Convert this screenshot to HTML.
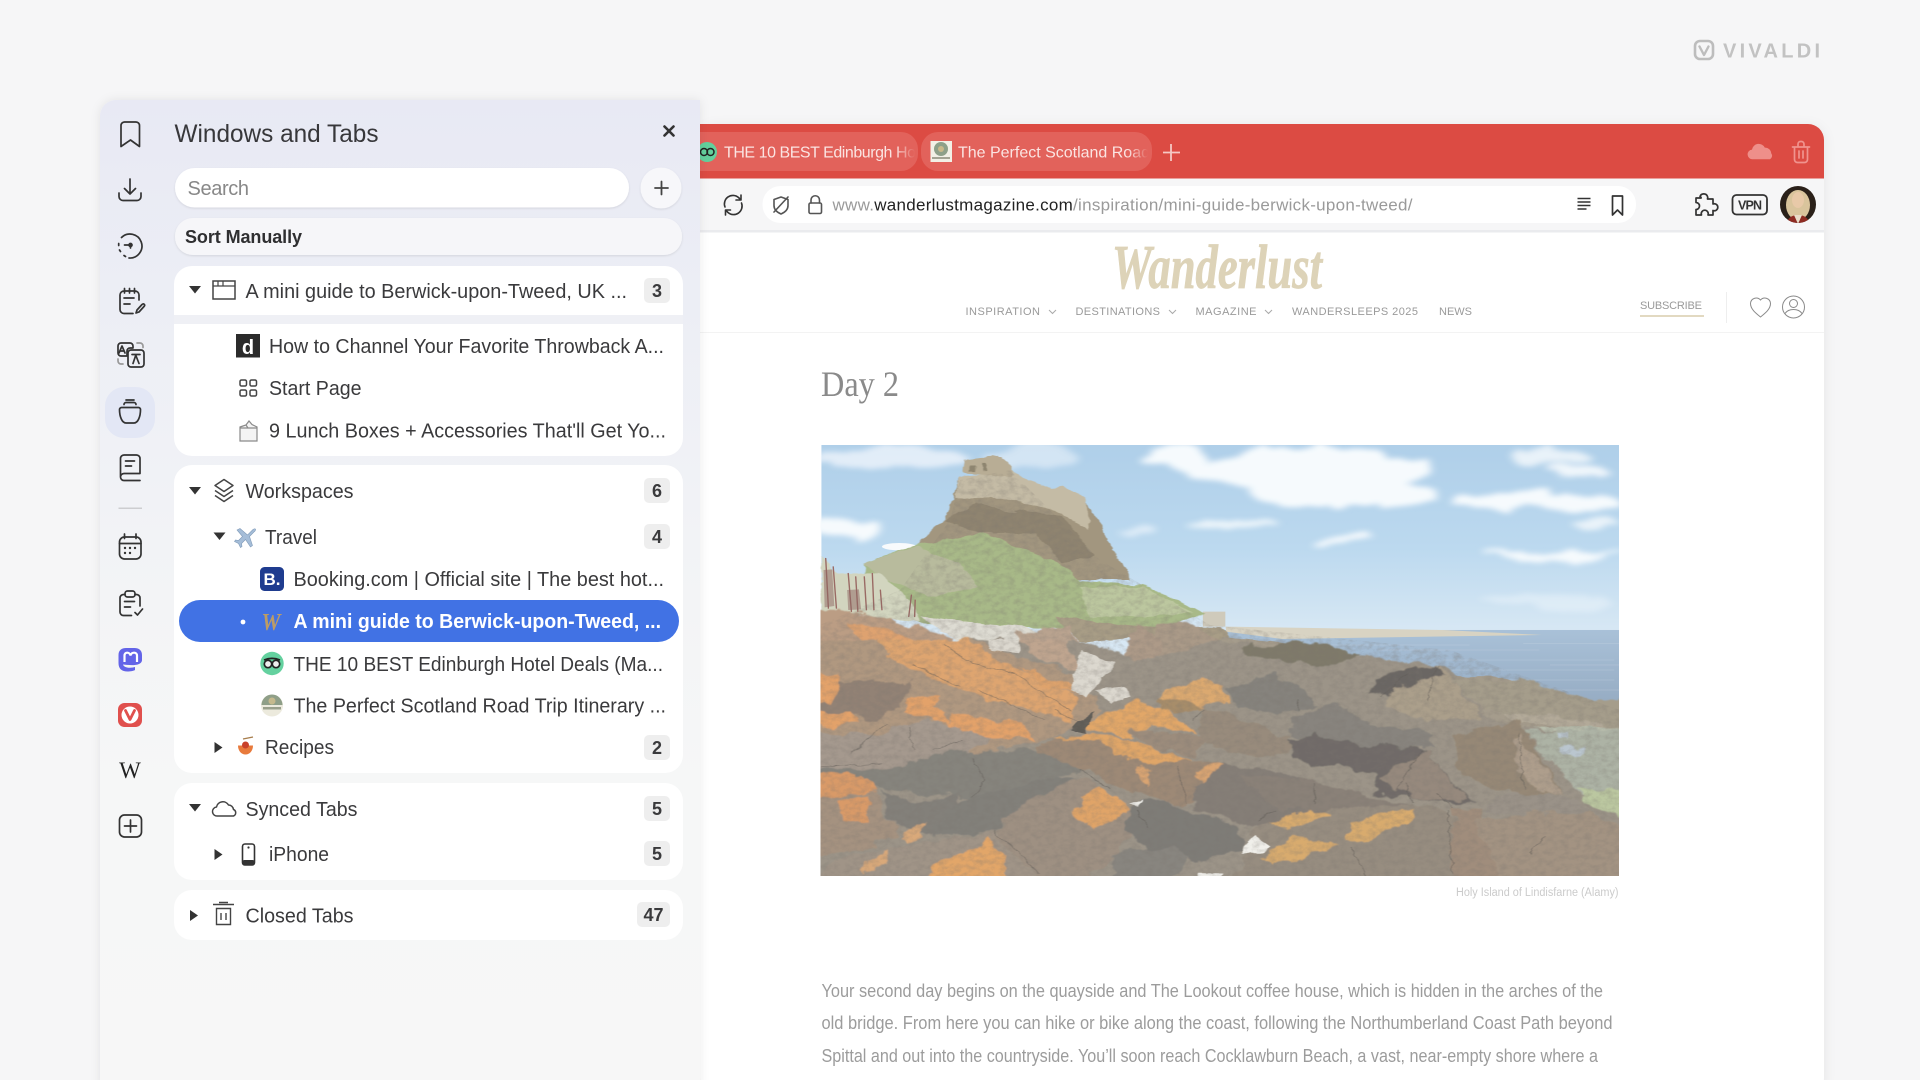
<!DOCTYPE html>
<html lang="en"><head><meta charset="utf-8"><title>Vivaldi Windows and Tabs</title>
<style>
html,body{margin:0;padding:0;width:1920px;height:1080px;overflow:hidden;background:#f6f6f7}
svg{display:block;position:absolute;left:0;top:0}
text{font-family:"Liberation Sans",sans-serif;fill:#333}
.t{font-size:20px;fill:#3a3a3c}
.b{font-size:18px;font-weight:700;fill:#3a3a3c;text-anchor:middle}
.i{fill:none;stroke:#333;stroke-width:1.7;stroke-linecap:round;stroke-linejoin:round}
.n{font-size:11px;fill:#9a9a9a;letter-spacing:1px}
.p{font-size:18px;fill:#9c9c9c}
</style></head><body>
<svg width="1920" height="1080" viewBox="0 0 1920 1080" xmlns="http://www.w3.org/2000/svg">
<defs>
<linearGradient id="pg" x1="0" y1="100" x2="0" y2="1080" gradientUnits="userSpaceOnUse"><stop offset="0" stop-color="#e8e9f4"/><stop offset=".2" stop-color="#eceef5"/><stop offset=".45" stop-color="#f2f3f6"/><stop offset=".7" stop-color="#f6f7f7"/><stop offset="1" stop-color="#f7f7f7"/></linearGradient>
<linearGradient id="sky" x1="0" y1="45" x2="0" y2="610" gradientUnits="userSpaceOnUse"><stop offset="0" stop-color="#afcfe9"/><stop offset=".55" stop-color="#bcd9ef"/><stop offset="1" stop-color="#d8e8f4"/></linearGradient>
<linearGradient id="sea" x1="0" y1="600" x2="0" y2="810" gradientUnits="userSpaceOnUse"><stop offset="0" stop-color="#a9c1d8"/><stop offset="1" stop-color="#97adc4"/></linearGradient>
<linearGradient id="f1" x1="895" y1="0" x2="915" y2="0" gradientUnits="userSpaceOnUse"><stop offset="0" stop-color="#fbe4e2"/><stop offset="1" stop-color="#e2625b"/></linearGradient>
<linearGradient id="f2" x1="1128" y1="0" x2="1148" y2="0" gradientUnits="userSpaceOnUse"><stop offset="0" stop-color="#fbe4e2"/><stop offset="1" stop-color="#e2625b"/></linearGradient>
<filter id="s1" x="-10%" y="-10%" width="120%" height="120%"><feDropShadow dx="0" dy="0" stdDeviation="5" flood-color="#000" flood-opacity=".08"/></filter>
<filter id="s2" x="-5%" y="-5%" width="110%" height="110%"><feDropShadow dx="0" dy="2" stdDeviation="6" flood-color="#000" flood-opacity=".07"/></filter>
<filter id="s3"><feDropShadow dx="0" dy="1" stdDeviation="1" flood-color="#000" flood-opacity=".1"/></filter>
<filter id="bl" x="-20%" y="-40%" width="140%" height="180%"><feTurbulence type="fractalNoise" baseFrequency=".012" numOctaves="4" seed="7" result="n"/><feDisplacementMap in="SourceGraphic" in2="n" scale="70" xChannelSelector="R" yChannelSelector="G" result="d"/><feGaussianBlur in="d" stdDeviation="8"/></filter>
<filter id="bs" x="-5%" y="-5%" width="110%" height="110%"><feTurbulence type="fractalNoise" baseFrequency=".03" numOctaves="4" seed="2" result="n"/><feDisplacementMap in="SourceGraphic" in2="n" scale="16" xChannelSelector="R" yChannelSelector="G" result="d"/><feGaussianBlur in="d" stdDeviation="1"/></filter>
<filter id="bm" x="-5%" y="-5%" width="110%" height="110%"><feTurbulence type="fractalNoise" baseFrequency=".022" numOctaves="5" seed="11" result="n"/><feDisplacementMap in="SourceGraphic" in2="n" scale="42" xChannelSelector="R" yChannelSelector="G" result="d"/><feGaussianBlur in="d" stdDeviation="1.6"/></filter>
<filter id="nz" x="0" y="0" width="100%" height="100%"><feTurbulence type="fractalNoise" baseFrequency=".13 .2" numOctaves="4" seed="4"/><feColorMatrix values="0 0 0 0 .2  0 0 0 0 .18  0 0 0 0 .16  2 0 0 0 -.75"/></filter>
<clipPath id="ic"><rect x="820.5" y="445" width="798.5" height="431"/></clipPath>
<clipPath id="nc"><path d="M820 625L900 590 950 520 960 480 1010 470 1100 560 1210 625 1450 650 1620 710V876H820Z"/></clipPath>
<clipPath id="bc"><path d="M700 124H1808a16 16 0 0 1 16 16V1080H700Z"/></clipPath>
<clipPath id="av"><ellipse cx="1798" cy="204.500" rx="18" ry="18.500"/></clipPath>
</defs>

<!-- VIVALDI wordmark -->
<rect x="1695" y="41" width="18" height="18" rx="5" fill="none" stroke="#bdbdbd" stroke-width="2.6"/>
<path d="M1699.500 46.500l4.500 8.500 4.500-8.500" fill="none" stroke="#bdbdbd" stroke-width="2.400" stroke-linecap="round" stroke-linejoin="round"/>
<text x="1723" y="57.500" font-size="20" font-weight="700" textLength="97" style="fill:#c2c2c2">VIVALDI</text>

<!-- Browser window -->
<rect x="700" y="124" width="1124" height="970" rx="16" fill="#fff" filter="url(#s2)"/>
<g clip-path="url(#bc)">
<rect x="700" y="124" width="1124" height="54.500" fill="#dc4b43"/>
<rect x="700" y="178.500" width="1124" height="52" fill="#f6f6f7"/>
<rect x="700" y="230" width="1124" height="2.500" fill="#eaebee"/>
<rect x="660" y="132" width="258" height="39" rx="17" fill="#e2625b"/>
<rect x="921" y="132" width="231" height="39" rx="17" fill="#e2625b"/>
<circle cx="707" cy="152" r="10" fill="#63cf9c"/>
<circle cx="704" cy="152" r="3.500" fill="none" stroke="#222" stroke-width="1.500"/><circle cx="710.500" cy="152" r="3.500" fill="none" stroke="#222" stroke-width="1.500"/>
<text x="724" y="157.500" font-size="16" textLength="192" style="fill:url(#f1)">THE 10 BEST Edinburgh Ho</text>
<rect x="930.500" y="141" width="21.500" height="21" fill="#f2f0e6"/><circle cx="941" cy="149" r="7" fill="#8ea089"/><circle cx="941" cy="149" r="3" fill="#c9b98a"/><rect x="932" y="157" width="18" height="2" fill="#a4a494"/>
<text x="958" y="157.500" font-size="16" textLength="192" style="fill:url(#f2)">The Perfect Scotland Road</text>
<path d="M1171 144v17M1163 152.500h17" stroke="#f5c8c4" stroke-width="1.800" fill="none"/>
<path transform="translate(1760 152) scale(.8) translate(-1757 -152)" d="M1748 161a6 6 0 0 1-1-12 8.500 8.500 0 0 1 16-2.500 7.500 7.500 0 0 1 8 7 5 5 0 0 1-1.500 7.500z" fill="#ee8f8a"/>
<path d="M1792.500 147h17M1798 147v-3a2.500 2.500 0 0 1 2.500-2.500h1a2.500 2.500 0 0 1 2.500 2.500v3M1794.500 147v12.500a3 3 0 0 0 3 3h7a3 3 0 0 0 3-3V147M1799 151v7M1803 151v7" fill="none" stroke="#f0938e" stroke-width="1.700" stroke-linecap="round" stroke-linejoin="round"/>

<!-- Address row -->
<rect x="762.500" y="186" width="873.500" height="37" rx="18" fill="#fff"/>
<g class="i" style="stroke-width:1.600">
<path d="M725 207a8.500 8.500 0 0 1 13.500-9.500l2 2M741.500 203a8.500 8.500 0 0 1-13.500 9.500l-2-2"/>
<path d="M741 195v5h-5M725.500 215v-5h5"/>
<path d="M781 197l7 2.500v6c0 4.500-3.500 7-7 8.500-3.500-1.500-7-4-7-8.500v-6z" stroke="#555" /><path d="M774 212l14-15" stroke="#555"/>
<rect x="809" y="203" width="12.500" height="10.500" rx="1.500" stroke="#555"/><path d="M811 203v-3a4.200 4.200 0 0 1 8.500 0v3" stroke="#555"/>
</g>
<text x="832.500" y="210.500" font-size="17" textLength="580"><tspan style="fill:#9a9a9a">www.</tspan><tspan style="fill:#222">wanderlustmagazine.com</tspan><tspan style="fill:#9a9a9a">/inspiration/mini-guide-berwick-upon-tweed/</tspan></text>
<path d="M1577.500 198.500h13M1577.500 202h13M1577.500 205.500h13M1577.500 209h9" stroke="#333" stroke-width="1.500" fill="none"/>
<path d="M1612.500 196h10v19l-5-5-5 5z" class="i"/>
<path d="M1700 196.500a4 4 0 0 1 7.500 0c.5 1 0 2 0 2.500h5.500v5a3.500 3.500 0 1 1 0 6.500v4.500h-5a3.500 3.500 0 1 0-6.500 0h-5.500v-5.500a3.500 3.500 0 1 0 0-7v-4.500h5c.5 0-.500-1 -.5-1.500z" class="i" style="stroke-width:1.700"/>
<rect x="1732.500" y="195" width="34.500" height="19.500" rx="4" fill="none" stroke="#333" stroke-width="1.800"/>
<text x="1750" y="209.500" font-size="12.500" font-weight="700" text-anchor="middle" textLength="24" style="fill:#333">VPN</text>
<g clip-path="url(#av)"><rect x="1779" y="185" width="38" height="39" fill="#2a2019"/><ellipse cx="1798" cy="205" rx="12" ry="15" fill="#d9c49c"/><ellipse cx="1798" cy="200" rx="6" ry="8" fill="#e8c9a8"/><path d="M1786 224c2-7 7-9 12-9s10 2 12 9z" fill="#8e2b22"/><path d="M1794 215h8l-4 9z" fill="#e9dcc8"/></g>

<!-- Site header -->
<text x="1112" y="288" font-size="62" font-weight="700" font-style="italic" textLength="210" lengthAdjust="spacingAndGlyphs" stroke="#ddd3b8" stroke-width=".8" style="font-family:'Liberation Serif',serif;fill:#ddd3b8">Wanderlust</text>
<text x="965.500" y="315" class="n" textLength="75.500">INSPIRATION</text>
<path d="M1049 310l3.500 3.500 3.500-3.500M1169 310l3.500 3.500 3.500-3.500M1265 310l3.500 3.500 3.500-3.500" fill="none" stroke="#aaa"/>
<text x="1075.500" y="315" class="n" textLength="85.500">DESTINATIONS</text>
<text x="1195.500" y="315" class="n" textLength="62">MAGAZINE</text>
<text x="1292" y="315" class="n" textLength="127">WANDERSLEEPS 2025</text>
<text x="1439" y="315" class="n" textLength="34">NEWS</text>
<text x="1640" y="309" class="n" textLength="63">SUBSCRIBE</text>
<rect x="1640" y="315" width="64" height="2" fill="#e2d9c1"/>
<rect x="1726" y="292" width="1" height="31" fill="#eeeeee"/>
<path d="M1760.500 317c-5-4-10-8-10-13.500a5.700 5.700 0 0 1 10-3.500 5.700 5.700 0 0 1 10 3.500c0 5.500-5 9.500-10 13.500z" fill="none" stroke="#8a8a8a" stroke-width="1"/>
<circle cx="1793.500" cy="307" r="11" fill="none" stroke="#8a8a8a" stroke-width="1"/><circle cx="1793.500" cy="303.500" r="4" fill="none" stroke="#8a8a8a" stroke-width="1"/><path d="M1785 313.500c2-3 5-4 8.500-4s6.500 1 8.500 4" fill="none" stroke="#8a8a8a" stroke-width="1"/>
<rect x="700" y="332" width="1124" height="1" fill="#f3f3f3"/>

<text x="821" y="396" font-size="36" textLength="78" lengthAdjust="spacingAndGlyphs" style="font-family:'Liberation Serif',serif;fill:#8a8a8a">Day 2</text>

<!-- Photo -->
<g clip-path="url(#ic)">
<g transform="translate(800 430) scale(.5357 .3333)">
<rect x="40" y="45" width="1490" height="1300" fill="url(#sky)"/>
<g filter="url(#bl)" fill="#f6fafd">
<ellipse cx="170" cy="85" rx="160" ry="30" opacity=".7"/>
<ellipse cx="430" cy="80" rx="90" ry="35" opacity=".5"/>
<ellipse cx="700" cy="85" rx="55" ry="35"/>
<ellipse cx="960" cy="120" rx="230" ry="65"/>
<ellipse cx="1010" cy="190" rx="170" ry="45"/>
<ellipse cx="800" cy="280" rx="85" ry="16" opacity=".85"/>
<ellipse cx="1400" cy="80" rx="70" ry="28" opacity=".8"/>
<ellipse cx="1460" cy="130" rx="60" ry="18" opacity=".9"/>
<ellipse cx="1380" cy="215" rx="160" ry="26"/>
<ellipse cx="1490" cy="285" rx="40" ry="22" opacity=".8"/>
<ellipse cx="1400" cy="375" rx="125" ry="13"/>
<ellipse cx="80" cy="295" rx="60" ry="28"/>
<ellipse cx="1010" cy="328" rx="60" ry="12"/>
<ellipse cx="640" cy="310" rx="40" ry="12" opacity=".6"/>
<ellipse cx="1400" cy="515" rx="130" ry="22" opacity=".4"/>
</g>
<ellipse cx="185" cy="350" rx="32" ry="11" fill="#f8fafc"/>
<!-- sea and shore -->
<rect x="780" y="600" width="760" height="260" fill="url(#sea)"/>
<g fill="none" stroke="#c8d6e2" stroke-width="1.500" opacity=".55">
<path d="M1080 660h300M1200 690h320M1110 720h410M1260 750h260M950 645h300M1350 640h180M1300 780h230M1400 705h130"/>
</g>
<path d="M795 590L1200 600 1385 615 1180 620 900 627 795 605Z" fill="#d8d3c3"/>
<rect x="752" y="545" width="42" height="45" fill="#cfcabb"/>
<!-- hill -->
<g filter="url(#bs)">
<path d="M215 345L270 270 285 210 295 140 470 190 535 215 575 330 620 450 480 450 340 320Z" fill="#a2967f"/>
<path d="M270 270l60-50 80 30 60 60-130 0zM400 240l90 20 60 120-60 20z" fill="#8f8470"/>
<path d="M295 140L395 125 470 175 490 170 535 205 540 300 475 240 380 205 290 205Z" fill="#c4bba5"/>
<path d="M307 88L365 78 395 105 395 140 305 130Z" fill="#b8ad95"/>
<path d="M318 105h10v20h-10zM340 100h8v25h-8z" fill="#8e8570"/>
<path d="M215 345L340 310 480 395 525 455 640 465 755 550 690 590 560 600 230 580 120 520 120 400Z" fill="#a8b988"/>
<path d="M120 400L215 350 300 400 330 470 240 500 150 440Z" fill="#b8bb9d"/>
<path d="M520 470L640 470 735 550 640 560 540 560Z" fill="#bcc79f"/>
<path d="M40 380L70 430 150 430 210 520 225 575 40 552Z" fill="#d2d5bf"/>
<path d="M225 560L420 590 480 640 400 700 300 640Z" fill="#dedcd3"/>
<path d="M480 560L640 590 790 590 800 620 780 650 640 620 520 640Z" fill="#a89d86"/>
<path d="M790 620L900 640 1000 680 1200 740 1300 740 1530 840 1530 1100 1000 1000 700 800Z" fill="#a59c8c"/>
<path d="M1240 760l290 70v90l-200-50z" fill="#b3aa99"/>
<path d="M1370 890h160v280l-70-60z" fill="#b7bcab"/>
<path d="M1420 1060l110 50v60h-40z" fill="#b8c4a0"/>
</g>
<g fill="none" stroke="#9a6a64" stroke-width="2.600" stroke-linecap="round">
<path d="M48 385l5 150M62 410l6 125M90 430l6 115M104 440l4 105M120 440l4 100M135 430l3 110M150 480l3 60M208 495l-5 65M215 510l-1 50"/>
</g>
<path d="M88 480l22-2 4 60-24 2zM44 420l16-2 4 110-18 4z" fill="#8e6561" opacity=".5"/>
</g>
<!-- lower rocks -->
<g transform="translate(820 640) scale(.5102 .3333)">
<g filter="url(#bm)">
<path d="M-30 -90L95 -85 210 -30 290 10H-30Z" fill="#bb9d84"/>
<path d="M60 -50l70 25 60 30-110 10z" fill="#dea26f"/>
<path d="M390 -30L490 -35 520 30 390 30Z" fill="#b9a38f"/>
<path d="M590 60L630 -50 690 30 680 110Z" fill="#ad9a88"/>
<path d="M650 -50L720 -55 805 20 780 110 690 120Z" fill="#aa9a88"/>
<path d="M-30 0H520L620 60 780 0 1040 50 1230 80 1300 230 1380 260 1600 290V750H-30Z" fill="#9c9488"/>
<path d="M-30 0H300L500 110 560 210 470 290 300 340 120 360 -30 380Z" fill="#b09880"/>
<path d="M385 0H480L515 100 440 70Z" fill="#bfa58f"/>
<path d="M120 0H290L380 80 510 180 490 240 420 210 300 170 200 100 130 40Z" fill="#dea56f"/>
<path d="M390 80L500 140 500 165 430 130Z" fill="#dfa36c"/>
<path d="M-30 130L70 120 180 130 170 180 110 240 -30 200Z" fill="#928274"/>
<path d="M-30 100h65l-5 90h-60zM-30 205l90 15 25 25-55 15-60-5zM180 170h50l20 80-70-25-20-15zM250 210l150 50 20 40-100 0-70-35z" fill="#e3a26a"/>
<path d="M-30 270l120 20 130-50 60 30 60 30-120 80-250 20Z" fill="#a5998e"/>
<path d="M-30 385h160l120-50 230-10 70 50-120 60-120 60-60-30-90-10-190-20Z" fill="#86847d"/>
<path d="M-30 400h105l40 90 40 90-70 50-115 20Z" fill="#a59280"/>
<path d="M-30 400h110l25 60-135 20zM30 485l60-15 10 80-55-10z" fill="#d99a68"/>
<path d="M115 455l80 30 60-20 40 80-90 50-60-40Z" fill="#83807a"/>
<path d="M345 570L400 470 520 410 610 510 615 590 520 730H400Z" fill="#9e9082"/>
<path d="M500 510L540 430 600 490 605 510 540 560 520 560Z" fill="#e0a468"/>
<path d="M250 500L410 420 500 420 400 490 340 570 220 590Z" fill="#82807a"/>
<path d="M-30 750L50 650 340 570 450 750Z" fill="#a09487"/>
<path d="M300 630L340 590 380 740H210V680Z" fill="#e2a669"/>
<path d="M80 670l50-40 5 40-50 25zM160 590l60-50-20 50-30 20z" fill="#d9a97a"/>
<path d="M530 240L620 180 680 210 745 280 650 260 610 290 530 270Z" fill="#e2a768"/>
<path d="M610 270L760 290 740 350 640 310Z" fill="#9c8c7c"/>
<path d="M430 310L540 280 620 300 720 360 780 370 810 450 720 500 600 450 510 380 430 340Z" fill="#9d8976"/>
<path d="M450 300L540 280 620 300 730 360 640 370 590 350 540 300Z" fill="#e0a668"/>
<path d="M730 390l50-20 25 70-30 40zM620 380l30 0-10 60-20-20z" fill="#d9a472"/>
<path d="M780 370L840 380 930 410 1130 500 900 570 820 550 720 490Z" fill="#857e77"/>
<path d="M820 400L960 420 1150 490 1100 520 900 510Z" fill="#8a8178"/>
<path d="M610 490l60-10 150 80 10 70-90 40-100-40-40-60Z" fill="#7e7b77"/>
<path d="M570 640l110-20 30 40-20 70H570Z" fill="#88857f"/>
<path d="M860 560L1000 510 1160 490 1240 520 1260 740H810Z" fill="#978d80"/>
<path d="M880 550L960 510 1000 530 920 570ZM870 650L930 590 1020 610 990 640 880 670ZM1035 550L1160 510 1150 550 1060 610 1030 590Z" fill="#d8ab6e"/>
<path d="M1240 500L1300 510 1350 740 1240 740Z" fill="#a08d7b"/>
<path d="M1285 540L1380 515 1500 520 1600 570V750H1350Z" fill="#a39382"/>
<path d="M1310 480l60-25 120 25 10 40-190-5z" fill="#9a9288"/>
<path d="M915 300L1000 280 1190 330 1280 490 1160 470 1090 460 1090 400 920 360Z" fill="#6f6b67"/>
<path d="M1100 420L1190 330 1270 480 1160 470Z" fill="#96897d"/>
<path d="M1240 290L1370 240 1460 470 1330 450 1260 400Z" fill="#968876"/>
<path d="M1370 280l90 190-60-20-40-90z" fill="#ae9e8c"/>
<path d="M930 230L1000 190 1100 260 1190 270 1210 320 1100 320 1000 290 920 290Z" fill="#88847e"/>
<path d="M1100 150L1150 85 1220 80 1300 240 1190 240 1100 200Z" fill="#ab9f8b"/>
<path d="M1070 150L1140 90 1210 80 1225 110 1150 130 1100 170Z" fill="#6a6663"/>
<path d="M750 200L920 290 910 340 850 350 750 310Z" fill="#988b7c"/>
<path d="M660 170l90-60 40 30 10 40-60 30Z" fill="#dba96f"/>
<path d="M660 170l70 20 20 20-80 0Z" fill="#a78d6a"/>
<path d="M800 150l100-50 80 90-70 30-100-20Z" fill="#86837d"/>
<path d="M820 20L970 5 1060 50 1000 70 850 55Z" fill="#7f7a6b"/>
<path d="M1240 120L1300 115 1400 130 1490 170 1600 190V280L1440 230 1300 210Z" fill="#a59d8b"/>
<path d="M1380 270h220v250l-100-50-80-120z" fill="#adb3a5"/>
<path d="M1490 440l110 20v80l-90-40z" fill="#bbc7a0"/>
<path d="M1440 280h30l-10 15-20-5zM1450 320h50l-20 20-30-5z" fill="#bac6cf"/>
</g>
<g filter="url(#bs)">
<path d="M330 0h60v40l-60-10zM510 30l70 40-20 40-40 60-30-20zM540 150l60-10 10 30-40 20z" fill="#dcd8cf"/>
<path d="M825 640l25-55 30 35-10 20z" fill="#f0efea"/>
<path d="M740 700h50l-5 10h-50zM605 490l30-15-15 25z" fill="#eeede8"/>
<path d="M490 270l50-60-20 70z" fill="#5f5b57"/>
</g>
<g fill="none" stroke="#5e5a55" stroke-width="1.800" opacity=".55" stroke-linecap="round" filter="url(#bs)">
<path d="M240 10l60 60 80 30 110 110M180 70l90 70M310 150l130 90M0 380l120-10M300 360l20 60-20 50M60 340l70-90M175 260l10 70M280 300l-60 30M510 250l-50-40M730 240l20-30M510 390l60 60M700 380l20 110M970 430l0 60M1230 510l10 190M1040 620l30 90M1180 330l-50 120M1370 280l10 170M1150 430l10 60M1420 590l-30 50M340 570l90 130M620 510l20 50M860 540l30-30M1210 80l-20 100M1150 100l-50 70M940 180l-5 30M1240 500l-30-40"/>
</g>
</g>
<g clip-path="url(#nc)"><rect x="820" y="445" width="800" height="431" filter="url(#nz)" opacity=".3"/></g>
</g>
<text x="1456" y="896" font-size="11.500" textLength="162.500" lengthAdjust="spacingAndGlyphs" style="fill:#cbcbcb">Holy Island of Lindisfarne (Alamy)</text>
<text x="821.500" y="997" class="p" textLength="781.500" lengthAdjust="spacingAndGlyphs">Your second day begins on the quayside and The Lookout coffee house, which is hidden in the arches of the</text>
<text x="821.500" y="1029" class="p" textLength="791" lengthAdjust="spacingAndGlyphs">old bridge. From here you can hike or bike along the coast, following the Northumberland Coast Path beyond</text>
<text x="821.500" y="1062" class="p" textLength="776.500" lengthAdjust="spacingAndGlyphs">Spittal and out into the countryside. You’ll soon reach Cocklawburn Beach, a vast, near-empty shore where a</text>
</g>

<!-- Panel -->
<path d="M116 100H700V1090H100V116a16 16 0 0 1 16-16Z" fill="url(#pg)" filter="url(#s1)"/>
<rect x="105" y="387" width="50" height="51" rx="19" fill="#e3e7f5"/>

<!-- Sidebar icons -->
<g class="i">
<path d="M121 125.500a3.500 3.500 0 0 1 3.500-3.500h11.500a3.500 3.500 0 0 1 3.500 3.500v21l-9-6.500-9.500 6.500z"/>
<path d="M130 179v14.500M124.500 188.500l5.500 5.500 5.500-5.500M119 193v3.500a4 4 0 0 0 4 4h14a4 4 0 0 0 4-4V193"/>
<path d="M121.500 237.500a12 12 0 1 1 7.500 20.500M118.700 243.500v2M119.500 250l1 1.500M124 255.500l1.500 1"/>
<path d="M124.500 245h7"/><circle cx="130.500" cy="245" r="1.500" fill="#333"/><path d="M130.500 245v3"/>
<path d="M139 300v-5a4 4 0 0 0-4-4h-11a4 4 0 0 0-4 4v14.500a4 4 0 0 0 4 4h9M124.500 288.500v4.500M129.500 288.500v4.500M134.500 288.500v4.500M124 298h10M124 304h6"/>
<path d="M136 313l1-3 5-5.500c2-1.500 3.500.5 2 2l-5 5.500z"/>
<path d="M121 343h9a3 3 0 0 1 3 3v2h-3a3 3 0 0 0-3 3v5h-6a3 3 0 0 1-3-3v-7a3 3 0 0 1 3-3z"/>
<path d="M131 350h10a3 3 0 0 1 3 3v11a3 3 0 0 1-3 3h-10a3 3 0 0 1-3-3v-11a3 3 0 0 1 3-3z"/>
<path d="M119 353l3-7 3 7M120 351h4M132 354.500h8M136 354.500l-3 9M135.500 354.500l3.500 9"/>
<path d="M137 343h3a3 3 0 0 1 3 3v1.500" stroke="#999"/><path d="M118 359v2a3 3 0 0 0 3 3h2" stroke="#999"/>
<path d="M124 404.500a2 2 0 0 1 2-2h8a2 2 0 0 1 2 2M126 400h8M119.500 409.500c0-1 1-2 2-2h17c1 0 2 1 2 2 0 7-2.500 13.500-6.500 13.500h-8c-4 0-6.500-6.500-6.500-13.500z"/>
<path d="M120.500 458.500a3.500 3.500 0 0 1 3.500-3.500h12.500a3.500 3.500 0 0 1 3.500 3.500v15H124a3.500 3.500 0 0 0-3.500 3.500zM120.500 477a3.500 3.500 0 0 0 3.500 3.500h16M125.500 461h9M125.500 466h6"/>
</g>
<rect x="118.500" y="507.500" width="23.500" height="1.500" fill="#cdcdd0"/>
<g class="i">
<rect x="119.500" y="537" width="21.500" height="22" rx="5"/><path d="M119.500 543.500h21.500M124.500 534v4.500M136 534v4.500"/>
</g>
<g fill="#333"><circle cx="125" cy="548" r="1.200"/><circle cx="130" cy="548" r="1.200"/><circle cx="135" cy="548" r="1.200"/><circle cx="125" cy="553" r="1.200"/><circle cx="130" cy="553" r="1.200"/></g>
<g class="i">
<path d="M125 594.500h-1.500a3.500 3.500 0 0 0-3.500 3.500v14a3.500 3.500 0 0 0 3.500 3.500h8M135 594.500h1.500a3.500 3.500 0 0 1 3.500 3.500v8"/>
<rect x="125" y="591" width="10" height="6" rx="2.500"/><path d="M124.500 601.500h10M124.500 607h6M135 612.500l2.500 2.500 5-6"/>
</g>
<path d="M142 655c0-5-3.500-7-7.500-7h-8.500c-4 0-7.500 2-7.500 7v8c0 6 3.500 8.500 9 8.500 3 0 6-.5 7.500-1.500v-3c-3 1-11 1.500-12-2.500 9 1 18 1.500 19-4z" fill="#6364e8"/>
<path d="M124.500 662v-6.500c0-3.500 5-4 6 0 1-4 6.500-3.500 6.500 0V662" fill="none" stroke="#fff" stroke-width="2.200"/>
<rect x="118" y="703" width="24" height="24" rx="6.500" fill="#e0504d"/>
<circle cx="130" cy="715" r="8.500" fill="#fff"/><path d="M125.500 710.500l4.500 9 4.500-9" fill="none" stroke="#e0504d" stroke-width="2.800" stroke-linecap="round" stroke-linejoin="round"/>
<text x="130" y="778" font-size="23" text-anchor="middle" style="font-family:'Liberation Serif',serif;fill:#222">W</text>
<g class="i"><rect x="119.500" y="815" width="22" height="22" rx="5"/><path d="M130.500 820v12M124.500 826h12"/></g>

<!-- Panel header -->
<text x="174.500" y="142" font-size="25" textLength="204" lengthAdjust="spacingAndGlyphs" style="fill:#37373a">Windows and Tabs</text>
<path d="M664.500 126.500l9 9M673.500 126.500l-9 9" stroke="#333" stroke-width="2.600" stroke-linecap="round"/>
<rect x="175" y="168" width="454" height="39.500" rx="19.700" fill="#fff" filter="url(#s3)"/>
<text x="187.500" y="195" font-size="20" textLength="61.500" style="fill:#888">Search</text>
<circle cx="661" cy="188" r="20.500" fill="#f7f7fa" filter="url(#s3)"/>
<path d="M661.500 181.500v13M655 188h13" stroke="#444" stroke-width="1.800" stroke-linecap="round"/>
<rect x="175" y="218" width="507" height="37" rx="18" fill="#f6f6f9" filter="url(#s3)"/>
<text x="185" y="243" font-size="18" font-weight="700" textLength="117" style="fill:#2f2f31">Sort Manually</text>

<!-- Group 1 -->
<rect x="174" y="266" width="509" height="190" rx="18" fill="#fff"/>
<rect x="174" y="315" width="509" height="9" fill="#eff0f5"/>
<path d="M189 286h12l-6 7.500z" fill="#333"/>
<rect x="213" y="281" width="22" height="18" fill="none" stroke="#444" stroke-width="1.500"/><path d="M213 286h22M218 281v5M223 281v5" stroke="#444" stroke-width="1.200" fill="none"/>
<text x="245.500" y="298" class="t" textLength="381.500" lengthAdjust="spacingAndGlyphs">A mini guide to Berwick-upon-Tweed, UK ...</text>
<rect x="644" y="278" width="26" height="25" rx="5" fill="#eeeeee"/><text x="657" y="297" class="b">3</text>
<rect x="236" y="334" width="24" height="23.500" fill="#2b2b2b"/>
<text x="248" y="354" font-size="20" font-weight="700" text-anchor="middle" style="fill:#fff">d</text>
<text x="269" y="353" class="t" textLength="395" lengthAdjust="spacingAndGlyphs">How to Channel Your Favorite Throwback A...</text>
<g fill="none" stroke="#444" stroke-width="1.500"><rect x="240" y="380" width="6.500" height="6" rx="1.500"/><rect x="250" y="380" width="6.500" height="6" rx="1.500"/><rect x="240" y="390" width="6.500" height="6" rx="1.500"/><rect x="250" y="390" width="6.500" height="6" rx="1.500"/></g>
<text x="269" y="395" class="t" textLength="92.500" lengthAdjust="spacingAndGlyphs">Start Page</text>
<path d="M240 427l6-2 3-4 3 3.500 5 2.500v14h-17zM240 428h17M246 425l2 3" fill="#f4f4f4" stroke="#8a8a8a" stroke-width="1.200"/>
<text x="269" y="437.500" class="t" textLength="397" lengthAdjust="spacingAndGlyphs">9 Lunch Boxes + Accessories That'll Get Yo...</text>

<!-- Group 2 -->
<rect x="174" y="465" width="509" height="308" rx="18" fill="#fff"/>
<path d="M189 487h12l-6 7.500z" fill="#333"/>
<g fill="none" stroke="#444" stroke-width="1.500" stroke-linejoin="round"><path d="M224 479.500l9 6-9 6-9-6z"/><path d="M215 490.500l9 6 9-6M215 495.500l9 6 9-6"/></g>
<text x="245.500" y="498" class="t" textLength="108" lengthAdjust="spacingAndGlyphs">Workspaces</text>
<rect x="644" y="478" width="26" height="25" rx="5" fill="#eeeeee"/><text x="657" y="497" class="b">6</text>
<path d="M213.500 532.500h12l-6 7.500z" fill="#333"/>
<path d="M237 530l3-1.500 7.500 6.500 5.500-5.500c2-1.500 3.500-.5 2 1.500l-5.500 5.500 3 9-2 1.500-5-7.500-4 4 .5 3-1.500 1-2-4-4-2 1-1.500 3 .5 4-4z" fill="#a5bdd8" stroke="#7f9ab8" stroke-width=".6"/>
<text x="265" y="544" class="t" textLength="52" lengthAdjust="spacingAndGlyphs">Travel</text>
<rect x="644" y="524" width="26" height="25" rx="5" fill="#eeeeee"/><text x="657" y="543" class="b">4</text>
<rect x="260" y="567" width="24" height="24" rx="4.500" fill="#1f3c8f"/>
<text x="272" y="585" font-size="17" font-weight="700" text-anchor="middle" style="fill:#fff">B.</text>
<text x="293.500" y="586" class="t" textLength="370.500" lengthAdjust="spacingAndGlyphs">Booking.com | Official site | The best hot...</text>
<rect x="179" y="600" width="500" height="42" rx="21" fill="#4172e4"/>
<circle cx="243" cy="622" r="2.400" fill="#fff"/>
<text x="271" y="630" font-size="24" font-weight="700" font-style="italic" text-anchor="middle" textLength="19" lengthAdjust="spacingAndGlyphs" style="font-family:'Liberation Serif',serif;fill:#bb9c66">W</text>
<text x="293.500" y="628" font-size="20" font-weight="700" textLength="367.500" lengthAdjust="spacingAndGlyphs" style="fill:#fff">A mini guide to Berwick-upon-Tweed, ...</text>
<circle cx="272" cy="663.500" r="11.700" fill="#64d19f"/>
<circle cx="268" cy="664" r="3.700" fill="#eee" stroke="#222" stroke-width="1.700"/><circle cx="276" cy="664" r="3.700" fill="#eee" stroke="#222" stroke-width="1.700"/><path d="M264 660c5-2 11-2 16 0" stroke="#222" stroke-width="1.700" fill="none"/>
<text x="293.500" y="671" class="t" textLength="369.500" lengthAdjust="spacingAndGlyphs">THE 10 BEST Edinburgh Hotel Deals (Ma...</text>
<circle cx="272" cy="705.500" r="11" fill="#eceadd"/><path d="M261.500 705a10.500 10.500 0 0 1 21 0z" fill="#8f9f88"/><circle cx="272" cy="701" r="3.500" fill="#c5b98d"/><rect x="263" y="707" width="18" height="2.500" fill="#9aa08c"/>
<text x="293.500" y="712.500" class="t" textLength="372.500" lengthAdjust="spacingAndGlyphs">The Perfect Scotland Road Trip Itinerary ...</text>
<path d="M214.500 742l8 5.500-8 5.500z" fill="#333"/>
<path d="M238 745.500h15c0 5-3 9-7.500 9s-7.500-4-7.500-9z" fill="#e87a3c"/><circle cx="245.500" cy="745" r="3.500" fill="#c9402a"/><path d="M243 739l10-2" stroke="#a67c4a" stroke-width="1.200"/>
<text x="265" y="754" class="t" textLength="69" lengthAdjust="spacingAndGlyphs">Recipes</text>
<rect x="644" y="735" width="26" height="25" rx="5" fill="#eeeeee"/><text x="657" y="754" class="b">2</text>

<!-- Group 3 -->
<rect x="174" y="783" width="509" height="97" rx="18" fill="#fff"/>
<path d="M189 804h12l-6 7.500z" fill="#333"/>
<path d="M217.500 816a4.500 4.500 0 0 1-1-9 6.500 6.500 0 0 1 12-2 5 5 0 0 1 5 4.500 3.500 3.500 0 0 1 0 6.500z" fill="none" stroke="#444" stroke-width="1.500" stroke-linejoin="round"/>
<text x="245.500" y="816" class="t" textLength="112" lengthAdjust="spacingAndGlyphs">Synced Tabs</text>
<rect x="644" y="796" width="26" height="25" rx="5" fill="#eeeeee"/><text x="657" y="815" class="b">5</text>
<path d="M214.500 849l8 5.500-8 5.500z" fill="#333"/>
<rect x="242.500" y="844" width="12" height="21" rx="2.500" fill="none" stroke="#333" stroke-width="1.600"/><rect x="242.500" y="860" width="12" height="5" rx="2" fill="#333"/><circle cx="248.500" cy="847.500" r="1.100" fill="#333"/>
<text x="269" y="861" class="t" textLength="60" lengthAdjust="spacingAndGlyphs">iPhone</text>
<rect x="644" y="841" width="26" height="25" rx="5" fill="#eeeeee"/><text x="657" y="860" class="b">5</text>

<!-- Group 4 -->
<rect x="174" y="890" width="509" height="50" rx="18" fill="#fff"/>
<path d="M190 910l8 5.500-8 5.500z" fill="#333"/>
<path d="M213 904.500h21M219 902.500h9" stroke="#444" stroke-width="1.600"/>
<path d="M216.500 908.500h14v16h-14zM221 913v7M226 913v7" fill="none" stroke="#444" stroke-width="1.400"/>
<text x="245.500" y="922.500" class="t" textLength="108" lengthAdjust="spacingAndGlyphs">Closed Tabs</text>
<rect x="637" y="902" width="33" height="25" rx="5" fill="#eeeeee"/><text x="653.500" y="921" class="b">47</text>
</svg>
</body></html>
